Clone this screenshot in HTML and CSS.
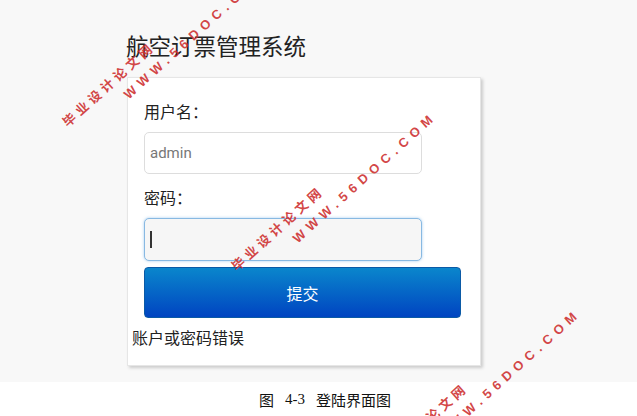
FILE: index.html
```html
<!DOCTYPE html>
<html lang="zh">
<head>
<meta charset="utf-8">
<title>航空订票管理系统</title>
<link rel="stylesheet" href="styles.css">
</head>
<body>
<div class="page">
  <main class="screen">
    <h1 class="title">航空订票管理系统</h1>
    <section class="card">
      <form class="form">
        <div class="label">用户名：</div>
        <div class="field"><span class="placeholder">admin</span></div>
        <div class="label label-2">密码：</div>
        <div class="field field-focus"><span class="caret"></span></div>
        <button type="button" class="btn">提交</button>
      </form>
      <p class="error">账户或密码错误</p>
    </section>
  </main>
  <footer class="caption">
    <span class="cap-cn">图</span>
    <span class="cap-num">4-3</span>
    <span class="cap-cn">登陆界面图</span>
  </footer>
  <div class="wm-layer">
    <div class="wm wm1"><span class="wm-cn">毕业设计论文网</span><span class="wm-en">WWW.56DOC.COM</span></div>
    <div class="wm wm2"><span class="wm-cn">毕业设计论文网</span><span class="wm-en">WWW.56DOC.COM</span></div>
    <div class="wm wm3"><span class="wm-cn">毕业设计论文网</span><span class="wm-en">WWW.56DOC.COM</span></div>
  </div>
</div>
</body>
</html>
```
FILE: styles.css
```css
html, body {
  margin: 0;
  padding: 0;
  background: #ffffff;
  font-family: Roboto, "Noto Sans CJK SC", sans-serif;
}

.page {
  position: relative;
  width: 637px;
  height: 416px;
  overflow: hidden;
}

.screen {
  height: 382px;
  box-sizing: border-box;
  background: #f8f8f8;
  padding: 30px 0 0 126px;
}

.title {
  margin: 0;
  font-family: "Noto Sans CJK SC", sans-serif;
  font-weight: 400;
  font-size: 22.5px;
  line-height: 30px;
  color: #222222;
}

.card {
  margin: 17px 0 0 1px;
  width: 354px;
  height: 289px;
  box-sizing: border-box;
  background: #ffffff;
  border: 1px solid #e6e6e6;
  box-shadow: 2px 2px 3px rgba(0, 0, 0, 0.18);
  padding: 23px 0 0 4px;
}

.form {
  display: flex;
  flex-direction: column;
  align-items: flex-start;
  padding-left: 12px;
  margin: 0;
}

.label {
  font-family: "Noto Sans CJK SC", sans-serif;
  font-size: 16px;
  line-height: 20px;
  color: #222222;
}

.label-2 {
  margin-top: 13px;
}

.field {
  margin-top: 11px;
  width: 278px;
  height: 42px;
  box-sizing: border-box;
  border: 1px solid #dddddd;
  border-radius: 5px;
  background: #ffffff;
  display: flex;
  align-items: center;
  padding-left: 5px;
}

.placeholder {
  font-family: Roboto, sans-serif;
  font-size: 15px;
  color: #777777;
}

.field-focus {
  height: 43px;
  border-color: #88b9e2;
  background: #f6f6f6;
  box-shadow: 0 0 3px rgba(90, 160, 225, 0.55);
}

.caret {
  width: 2px;
  height: 17px;
  background: #333333;
}

.btn {
  margin-top: 6px;
  width: 317px;
  height: 51px;
  padding: 0;
  box-sizing: border-box;
  border: 1px solid #0b5aa6;
  border-radius: 4px;
  background: linear-gradient(#0a86cc, #0044c1);
  color: #ffffff;
  font-family: "Noto Sans CJK SC", sans-serif;
  font-size: 16px;
  display: flex;
  align-items: center;
  justify-content: center;
}

.error {
  margin: 9px 0 0 0;
  font-family: "Noto Sans CJK SC", sans-serif;
  font-size: 16px;
  line-height: 20px;
  color: #222222;
}

.caption {
  height: 34px;
  display: flex;
  align-items: center;
  justify-content: center;
  gap: 11px;
  padding-left: 13px;
  font-size: 15px;
  color: #111111;
}

.cap-cn {
  font-family: "Noto Sans CJK SC", sans-serif;
}

.cap-num {
  font-family: "Liberation Serif", serif;
}

.wm-layer {
  position: absolute;
  left: 0;
  top: 0;
  width: 637px;
  height: 416px;
  overflow: hidden;
  pointer-events: none;
}

.wm {
  position: absolute;
  transform: rotate(-42deg);
  transform-origin: 0 0;
  color: rgba(205, 45, 45, 0.88);
  font-weight: 700;
  font-size: 13px;
  line-height: 16px;
  white-space: nowrap;
}

.wm-cn {
  display: block;
  font-family: "Noto Sans CJK SC", sans-serif;
  letter-spacing: 4px;
}

.wm-en {
  display: block;
  margin: 5px 0 0 64px;
  font-family: "Liberation Sans", sans-serif;
  letter-spacing: 5.5px;
}

.wm1 { left: 59px; top: 118px; }
.wm2 { left: 228px; top: 262px; }
.wm3 { left: 372px; top: 459px; }
```
